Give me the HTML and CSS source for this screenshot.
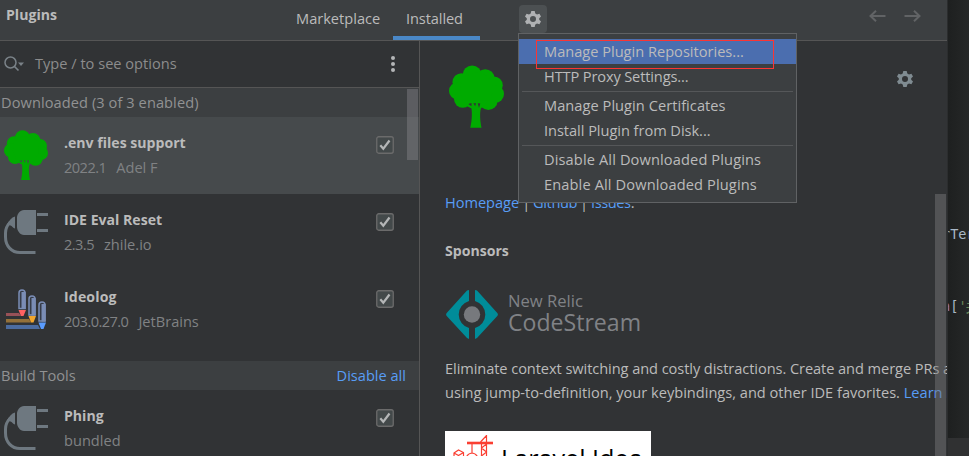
FILE: index.html
```html
<!DOCTYPE html>
<html lang="en">
<head>
<meta charset="utf-8">
<title>Plugins</title>
<link rel="stylesheet" href="styles.css">
</head>
<body>
<svg class="defs" width="0" height="0">
  <defs>
    <symbol id="tree" viewBox="0 0 44 50">
      <g fill="#00ab00">
        <circle cx="18.500" cy="7.800" r="7.600"/><circle cx="29" cy="10.500" r="7.400"/><circle cx="10" cy="13.500" r="7.200"/><circle cx="36" cy="16" r="7"/><circle cx="7" cy="20.500" r="7"/><circle cx="37" cy="23" r="7"/><circle cx="11" cy="27" r="7"/><circle cx="31.500" cy="28.500" r="7.300"/><circle cx="22" cy="19" r="13"/>
        <path d="M11 28H32L25.500 34.500C24.500 38 24.800 44 26 50H17C18.500 44 18.500 38 18 34.500L13 32Z"/>
      </g>
      <path fill="var(--gap)" d="M15.500 31l2.500-.8v2.600zM19.500 30.300h2.200l-.8 2.500zM23 30.300l2 .2-1 3.700z"/>
    </symbol>
    <symbol id="plug" viewBox="0 0 44 44">
      <path fill="#6e7880" d="M20 0H32V25H20C16 25 13 20.500 13 17V8C13 4 16 0 20 0ZM33 3H44V6H33ZM33 19H44V22H33ZM11 6.500V18.500C9 18 8 16 6.500 15.500L3 14.500C5 10.500 7.500 7.500 11 6.500Z"/>
      <path fill="none" stroke="#6e7880" stroke-width="3" d="M6 12.500C3 15.500 1.500 19 1.500 23V27C1.500 36 7.500 42.500 16 42.500H31.500"/>
    </symbol>
    <symbol id="gear" viewBox="0 0 16 16">
      <path fill="currentColor" fill-rule="evenodd" d="M6.300 0H9.700L10.300 2.500L12 3.500L14.400 2.700L16 5.500L14.200 7.200V8.800L16 10.500L14.400 13.300L12 12.500L10.300 13.500L9.700 16H6.300L5.700 13.500L4 12.500L1.600 13.300L0 10.500L1.800 8.800V7.200L0 5.500L1.600 2.700L4 3.500L5.700 2.500ZM8 5A3 3 0 1 0 8 11A3 3 0 1 0 8 5Z"/>
    </symbol>
    <symbol id="check" viewBox="0 0 18 18">
      <rect x=".75" y=".75" width="16.500" height="16.500" rx="2" fill="#43494a" stroke="#6b6b6b" stroke-width="1.300"/>
      <path d="M4.300 9.200L7.300 12.700L13.500 4.500" fill="none" stroke="#b4b6b7" stroke-width="2.200"/>
    </symbol>
  </defs>
</svg>
<div class="screen">
  <div class="dialog">
    <header class="topbar">
      <h1 class="title">Plugins</h1>
      <nav class="tabs"><a class="tab">Marketplace</a><a class="tab active">Installed</a></nav>
      <div class="settings">
        <button class="gear-button" aria-label="Settings"><svg width="16" height="16"><use href="#gear"/></svg></button>
        <div class="menu">
          <div class="item hot">Manage Plugin Repositories...<span class="marker"></span></div>
          <div class="item proxy">HTTP Proxy Settings...</div>
          <hr>
          <div class="item certs">Manage Plugin Certificates</div>
          <div class="item disk">Install Plugin from Disk...</div>
          <hr>
          <div class="item wide">Disable All Downloaded Plugins</div>
          <div class="item wide">Enable All Downloaded Plugins</div>
        </div>
      </div>
      <div class="history">
        <svg width="17" height="12" viewBox="0 0 17 12"><path d="M16.500 6H2M7 .8L1.500 6L7 11.200"/></svg>
        <svg width="17" height="12" viewBox="0 0 17 12"><path d="M.5 6H15M10 .8L15.500 6L10 11.200"/></svg>
      </div>
    </header>
    <main class="panes">
      <section class="list">
        <div class="search">
          <svg width="21" height="16" viewBox="0 0 21 16"><circle cx="6.500" cy="6.500" r="5.500" fill="none" stroke="#7a8288" stroke-width="1.500"/><path d="M10.500 10.500L14.500 14.500" stroke="#7a8288" stroke-width="1.700"/><path d="M14 6.500H20L17 10Z" fill="#7a8288"/></svg>
          <span class="hint">Type / to see options</span>
          <svg class="more" width="6" height="16" viewBox="0 0 6 16" fill="#b4b6b7"><circle cx="3" cy="2" r="2"/><circle cx="3" cy="8" r="2"/><circle cx="3" cy="14" r="2"/></svg>
        </div>
        <div class="scroll">
          <div class="group down">Downloaded (3 of 3 enabled)</div>
          <article class="row selected">
            <svg class="icon" width="44" height="50"><use href="#tree"/></svg>
            <div class="info"><h2>.env files support</h2><p><span class="num">2022.1</span><span>Adel F</span></p></div>
            <svg class="check" width="18" height="18"><use href="#check"/></svg>
          </article>
          <article class="row">
            <svg class="icon plug" width="44" height="44"><use href="#plug"/></svg>
            <div class="info"><h2>IDE Eval Reset</h2><p><span class="num">2.3.5</span><span>zhile.io</span></p></div>
            <svg class="check" width="18" height="18"><use href="#check"/></svg>
          </article>
          <article class="row last">
            <svg class="icon log" width="44" height="44" viewBox="0 0 44 44">
              <path fill="#985157" d="M2 26H15L17 29H2Z"/><path fill="#94713a" d="M2 32H25L27 35.500H2Z"/><path fill="#4c6ca0" d="M2 38H34L36 42H2Z"/>
              <g fill="#363c48" stroke="#7a8db5" stroke-width="1.500"><path d="M15 21.500V6A3 3 0 0 1 21 6V21.500Z"/><path d="M25 28V12A3 3 0 0 1 31 12V28Z"/><path d="M35 34V18A3 3 0 0 1 41 18V34Z"/></g>
              <g fill="#7a8db5"><path d="M17.500 5H21.700V22H17.500Z"/><path d="M27.500 11H31.700V28.500H27.500Z"/><path d="M37.500 17H41.700V34.500H37.500Z"/></g>
              <path fill="#ff6262" d="M14.500 23H22L19.500 29H17Z"/><path fill="#f3a62c" d="M24.500 29H32L29.500 35.500H27Z"/><path fill="#5a9cff" d="M34.500 35.500H42L39.500 42H37Z"/>
            </svg>
            <div class="info"><h2 class="ideolog">Ideolog</h2><p><span class="num">203.0.27.0</span><span>JetBrains</span></p></div>
            <svg class="check" width="18" height="18"><use href="#check"/></svg>
          </article>
          <div class="group"><span>Build Tools</span><a>Disable all</a></div>
          <article class="row">
            <svg class="icon plug" width="44" height="44"><use href="#plug"/></svg>
            <div class="info"><h2>Phing</h2><p><span>bundled</span></p></div>
            <svg class="check" width="18" height="18"><use href="#check"/></svg>
          </article>
          <div class="thumb"></div>
        </div>
      </section>
      <section class="details">
        <div class="hero">
          <svg class="hero-tree" width="55" height="63" preserveAspectRatio="none"><use href="#tree"/></svg>
          <svg class="hero-gear" width="16" height="16"><use href="#gear"/></svg>
        </div>
        <p class="links"><a>Homepage</a> | <a class="tight">Github</a> | <a class="tight">Issues</a>.</p>
        <h3>Sponsors</h3>
        <div class="sponsor">
          <svg width="52" height="49" viewBox="0 0 52 49"><path fill="#008c99" d="M21 .5L23 0V11A14 14 0 0 0 23 38V49L21 48L.7 26Q-.5 24.500 .7 23ZM31 .5L29 0V11A14 14 0 0 1 29 38V49L31 48L51.300 26Q52.500 24.500 51.300 23Z"/><circle cx="26" cy="24.500" r="8.200" fill="#77797d"/></svg>
          <div class="brand"><span class="small">New Relic</span><span class="big">CodeStream</span></div>
        </div>
        <p class="text"><span class="l1">Eliminate context switching and costly distractions. Create and merge PRs and issues</span><br>using jump-to-definition, your keybindings, and other IDE favorites. <a>Learn more</a></p>
        <div class="card">
          <svg width="48" height="40" viewBox="0 0 48 40" fill="none" stroke="#fa3f32" stroke-width="1.200"><path stroke-width="2.600" d="M14 8H40"/><path d="M27.500 7L33.500 .5V30M28.500 8V30M28.500 13L33.500 9M28.500 13L33.500 17L28.500 21L33.500 25M19 8V18M13 25Q13 19 19 18Q25 19 25 25M1 18L5.500 15L10.500 17.500V24L5.500 27L1 24ZM1 18L5.500 20.500L10.500 17.500"/></svg>
          <span>Laravel Idea</span>
        </div>
        <div class="track"></div>
      </section>
    </main>
  </div>
  <aside class="editor">
    <div class="code one"><i>r</i>Ter</div>
    <div class="code two"><em>a</em><b>[</b><s>'</s><s class="cjk">关</s></div>
    <div class="status"></div>
  </aside>
</div>
</body>
</html>
```
FILE: styles.css
```css
* { box-sizing: border-box; }
body { margin: 0; font: 14.6px "Open Sans", sans-serif; color: #bbbbbb; background: #232525; }
h1, h2, h3, p { margin: 0; font-weight: normal; }
svg { display: block; flex: none; }
a { color: #589df6; }
.defs { position: absolute; }
.screen { display: flex; width: 969px; height: 456px; overflow: hidden; }
.dialog { width: 948px; height: 456px; display: flex; flex-direction: column; background: #313335; border-right: 1px solid #2b2d2e; flex: none; }

.topbar { height: 41px; flex: none; display: flex; background: #3c3f41; border-bottom: 1px solid #555555; padding-left: 6px; }
.title { width: 274px; font-size: 14.1px; font-weight: bold; line-height: 29px; }
.tabs { display: flex; height: 40px; }
.tab { color: #bbbbbb; line-height: 37px; padding: 0 16px; width: 113px; white-space: nowrap; }
.tab.active { width: 87px; padding: 0 13px; border-bottom: 4px solid #4a88c7; letter-spacing: -.1px; }
.settings { position: relative; margin-left: 39px; padding-top: 5px; }
.gear-button { display: grid; place-items: center; width: 28px; height: 28px; padding: 0; border: 0; border-radius: 4px; background: #4c5052; color: #afb1b3; }
.history { display: flex; gap: 18px; margin: 10px 26px 0 auto; }
.history path { fill: none; stroke: #616365; stroke-width: 2; }

.menu { position: absolute; z-index: 5; left: -1px; top: 33px; width: 279px; height: 170px; padding-top: 5px; background: #3c3f41; border: 1px solid #606264; }
.item { position: relative; height: 25px; line-height: 25px; padding-left: 25px; white-space: nowrap; }
.item.hot { background: #4b6eaf; }
.proxy { letter-spacing: -.13px; }
.disk { letter-spacing: -.04px; }
.certs { letter-spacing: .05px; }
.wide { letter-spacing: .13px; }
.menu hr { height: 1px; margin: 2px 3px 1px; border: 0; background: #555759; }
.marker { position: absolute; left: 17px; top: 1px; width: 238px; height: 29px; border: 1px solid #fa3534; z-index: 2; }

.panes { display: flex; flex: 1; min-height: 0; }
.list { width: 420px; flex: none; border-right: 1px solid #555555; display: flex; flex-direction: column; }
.search { height: 47px; flex: none; display: flex; align-items: center; padding: 0 23px 0 4px; border-bottom: 1px solid #555555; color: #8c8c8c; }
.hint { margin: -2px 0 0 10px; }
.more { margin-left: auto; }
.scroll { position: relative; flex: 1; overflow: hidden; }
.group { display: flex; justify-content: space-between; height: 29px; line-height: 29px; padding: 0 13px 0 1px; background: #3c3f41; color: #919293; }
.down { letter-spacing: .08px; }
.row { display: flex; height: 77px; padding-left: 4px; --gap: #45494c; }
.row.selected { background: #464a4c; }
.row.last { margin-bottom: 13px; }
.icon { margin-top: 13px; }
.icon.plug { margin-top: 16px; }
.icon.log { margin-top: 16px; }
.info { margin: 13px 0 0 16px; flex: 1; }
.info h2 { font-size: 14.1px; font-weight: bold; line-height: 25px; color: #bbbbbb; }
.info .ideolog { letter-spacing: .15px; }
.info p { display: flex; gap: 10px; line-height: 25px; color: #808284; }
.num { letter-spacing: -.55px; }
.check { margin: 19px 25px 0 0; }
.thumb { position: absolute; right: 1px; top: 1px; width: 11px; height: 71px; background: rgba(140, 140, 145, .4); }

.details { position: relative; flex: 1; min-width: 0; padding-left: 25px; overflow: hidden; }
.hero { display: flex; height: 149px; --gap: #313335; }
.hero-tree { margin: 24px 0 0 4px; }
.hero-gear { margin: 30px 34px 0 auto; color: #7f8b91; }
.links { line-height: 24px; letter-spacing: -.03px; word-spacing: -.8px; }
.tight { letter-spacing: -.4px; }
.details h3 { margin-top: 24px; line-height: 26px; font-size: 14.1px; font-weight: bold; }
.sponsor { display: flex; margin: 26px 0 0 1px; height: 49px; }
.brand { display: flex; flex-direction: column; margin: -1px 0 0 10px; color: #808286; }
.small { font-size: 16.6px; line-height: 24px; }
.big { font-size: 23.1px; line-height: 24px; margin-top: -3px; }
.text { margin-top: 17px; line-height: 24px; white-space: nowrap; }
.l1 { letter-spacing: -.07px; }
.card { display: flex; width: 206px; height: 80px; margin-top: 27px; padding: 4px 0 0 8px; background: #fff; color: #000; }
.card span { margin-left: 0; font-size: 25.2px; line-height: 46px; white-space: nowrap; }
.track { position: absolute; right: 1px; top: 153px; width: 11px; height: 300px; background: rgba(120, 120, 122, .48); }

.editor { width: 21px; overflow: hidden; display: flex; flex-direction: column; background: linear-gradient(90deg, #1e2020, #252727); font: 13.6px/20px "DejaVu Sans Mono", monospace; color: #a9b7c6; white-space: nowrap; }
.code { display: flex; height: 20px; margin-left: -6px; }
.code i { font-style: normal; color: #8d989f; }
.one { margin-top: 224px; }
.two { margin-top: 52px; }
.two em { color: #9876aa; font-style: normal; }
.two b { font-weight: normal; }
.two s { color: #6a8759; text-decoration: none; }
.two .cjk { font-family: "Noto Sans CJK SC", sans-serif; margin-left: -1px; }
.status { flex: 1; margin-top: 122px; background: #303132; }
```
